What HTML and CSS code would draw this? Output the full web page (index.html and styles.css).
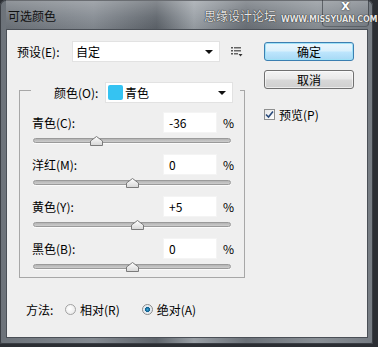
FILE: index.html
```html
<!DOCTYPE html>
<html lang="zh">
<head>
    <meta charset="UTF-8">
    <title>可选颜色</title>
    <link rel="stylesheet" href="styles.css">
</head>
<body>
    <div class="window">
        <div class="titlebar">
            <span class="title">可选颜色</span>
            <div class="closebox"><span class="close">X</span></div>
            <div class="watermark"><span class="mark-cn">思缘设计论坛</span><span class="mark-url">WWW.MISSYUAN.COM</span></div>
        </div>
        <div class="client">
            <div class="left">
                <div class="preset_row">
                    <span class="preset_label">预设(E):</span>
                    <div class="select preset_select"><span>自定</span><i class="arrow"></i></div>
                    <svg class="menu_icon" width="12" height="11" viewBox="0 0 12 11">
                        <rect x="0" y="1" width="2" height="1.5" fill="#555"/>
                        <rect x="3" y="1" width="7" height="1.5" fill="#666"/>
                        <rect x="0" y="4" width="2" height="1.5" fill="#555"/>
                        <rect x="3" y="4" width="7" height="1.5" fill="#666"/>
                        <rect x="0" y="7" width="2" height="1.5" fill="#555"/>
                        <rect x="3" y="7" width="4" height="1.5" fill="#666"/>
                        <path d="M7.5 8 L11.5 8 L9.5 10.5 Z" fill="#333"/>
                    </svg>
                </div>

                <div class="group">
                    <div class="legend">
                        <span class="legend_label">颜色(O):</span>
                        <div class="select color_select"><span class="swatch"></span><span>青色</span><i class="arrow"></i></div>
                    </div>

                    <div class="field"><span class="field_label">青色(C):</span><span class="input">-36</span><span class="pct">%</span></div>
                    <div class="slider"><div class="track"></div>
                        <svg class="thumb" style="left: 63px" width="13" height="10" viewBox="0 0 13 10"><path d="M6.5 0.5 L12.5 5 L12.5 9.5 L0.5 9.5 L0.5 5 Z" fill="url(#tg)" stroke="#7b7b7b"/><defs><linearGradient id="tg" x1="0" y1="0" x2="0" y2="1"><stop offset="0" stop-color="#ffffff"/><stop offset="1" stop-color="#d6d6d6"/></linearGradient></defs></svg>
                    </div>

                    <div class="field"><span class="field_label">洋红(M):</span><span class="input">0</span><span class="pct">%</span></div>
                    <div class="slider"><div class="track"></div>
                        <svg class="thumb" style="left: 99px" width="13" height="10" viewBox="0 0 13 10"><path d="M6.5 0.5 L12.5 5 L12.5 9.5 L0.5 9.5 L0.5 5 Z" fill="url(#tg)" stroke="#7b7b7b"/></svg>
                    </div>

                    <div class="field"><span class="field_label">黄色(Y):</span><span class="input">+5</span><span class="pct">%</span></div>
                    <div class="slider"><div class="track"></div>
                        <svg class="thumb" style="left: 104px" width="13" height="10" viewBox="0 0 13 10"><path d="M6.5 0.5 L12.5 5 L12.5 9.5 L0.5 9.5 L0.5 5 Z" fill="url(#tg)" stroke="#7b7b7b"/></svg>
                    </div>

                    <div class="field"><span class="field_label">黑色(B):</span><span class="input">0</span><span class="pct">%</span></div>
                    <div class="slider"><div class="track"></div>
                        <svg class="thumb" style="left: 99px" width="13" height="10" viewBox="0 0 13 10"><path d="M6.5 0.5 L12.5 5 L12.5 9.5 L0.5 9.5 L0.5 5 Z" fill="url(#tg)" stroke="#7b7b7b"/></svg>
                    </div>
                </div>

                <div class="method">
                    <span class="method_label">方法:</span>
                    <span class="radio"></span><span class="radio_text">相对(R)</span>
                    <span class="radio checked"></span><span class="radio_text">绝对(A)</span>
                </div>
            </div>

            <div class="right">
                <button class="btn btn_ok" type="button">确定</button>
                <button class="btn" type="button">取消</button>
                <div class="preview">
                    <span class="checkbox">
                        <svg width="9" height="9" viewBox="0 0 9 9"><path d="M1 4.5 L3.5 7 L8 1.5" stroke="#2a4a7a" stroke-width="1.6" fill="none"/></svg>
                    </span>
                    <span>预览(P)</span>
                </div>
            </div>
        </div>
    </div>
</body>
</html>
```

FILE: styles.css
```css
body {
    margin: 0;
    background-color: #2b2e33;
    font-family: "Noto Sans CJK SC", "Liberation Sans", sans-serif;
    font-size: 12px;
    color: #000;
}

.window {
    width: 373px;
    height: 344px;
    box-sizing: border-box;
    padding: 0 5px 6px 6px;
    border-radius: 6px 6px 2px 2px;
    background: linear-gradient(90deg, #6c7279 0%, #858b92 25%, #5e646b 42%, #9aa0a6 52%, #6b7178 66%, #8a9096 85%, #767c83 100%);
    box-shadow: inset 0 0 0 1px #3a3e44;
}

.titlebar {
    position: relative;
    height: 29px;
    display: flex;
    align-items: center;
    background: linear-gradient(180deg, rgba(255,255,255,0.25) 0%, rgba(255,255,255,0.05) 60%, rgba(0,0,0,0.05) 100%);
}
.title {
    margin-left: 2px;
    margin-top: 1px;
    color: #111;
}
.closebox {
    position: absolute;
    top: 0;
    right: -1px;
    width: 45px;
    height: 26px;
    border-left: 1px solid rgba(40,44,50,0.55);
    border-right: 1px solid rgba(40,44,50,0.55);
    border-bottom: 1px solid rgba(40,44,50,0.35);
    border-radius: 0 0 4px 4px;
    display: flex;
    justify-content: center;
}
.close {
    margin-top: 1px;
    font-family: "DejaVu Sans", sans-serif;
    font-weight: bold;
    font-size: 11px;
    line-height: 11px;
    height: 11px;
    color: #fff;
    text-shadow: 0 0 2px #222;
}
.watermark {
    position: absolute;
    top: 9px;
    left: 198px;
    display: flex;
    align-items: flex-end;
    white-space: nowrap;
    color: #e6e6e6;
    text-shadow: 0 0 1px #222, 0 0 1px #222;
}
.mark-cn {
    font-size: 12px;
    line-height: 14px;
}
.mark-url {
    margin-left: 5px;
    margin-bottom: -1px;
    font-family: "DejaVu Sans", sans-serif;
    font-weight: bold;
    font-size: 8px;
    line-height: 9px;
    letter-spacing: -0.2px;
}

.client {
    height: 309px;
    box-sizing: border-box;
    border: 1px solid #4a4f56;
    background-color: #efefef;
    display: flex;
    padding: 11px 0 0 10px;
}

.left {
    width: 235px;
}

.preset_row {
    display: flex;
    align-items: center;
    height: 21px;
}
.preset_label {
    width: 55px;
}
.select {
    position: relative;
    height: 21px;
    box-sizing: border-box;
    background-color: #fff;
    border: 1px solid #e2e2e2;
    display: flex;
    align-items: center;
    padding-left: 3px;
}
.preset_select {
    width: 148px;
}
.arrow {
    position: absolute;
    right: 6px;
    top: 8px;
    width: 0;
    height: 0;
    border-left: 4px solid transparent;
    border-right: 4px solid transparent;
    border-top: 4px solid #111;
}
.menu_icon {
    margin-left: 11px;
}

.group {
    margin: 28px 0 0 2px;
    width: 226px;
    box-sizing: border-box;
    border: 1px solid #a7a7a7;
    padding: 0 12px 5px 12px;
}
.legend {
    display: flex;
    align-items: center;
    margin: -9px 0 0 -1px;
    width: 209px;
    box-sizing: border-box;
    padding: 0 7px 0 23px;
    background-color: #efefef;
}
.legend_label {
    width: 51px;
}
.color_select {
    width: 128px;
    padding-left: 2px;
}
.swatch {
    width: 15px;
    height: 15px;
    margin-right: 2px;
    background-color: #35c3f2;
    border-radius: 2px;
}

.field {
    display: flex;
    align-items: center;
    height: 21px;
    margin-top: 8px;
}
.legend + .field {
    margin-top: 9px;
}
.field_label {
    flex: 1;
}
.input {
    width: 54px;
    height: 21px;
    box-sizing: border-box;
    background-color: #fff;
    border: 1px solid #f4f4f4;
    padding-left: 5px;
    line-height: 19px;
}
.pct {
    margin-left: 6px;
    width: 9px;
}

.slider {
    position: relative;
    margin: 1px 0 0 1px;
    width: 198px;
    height: 12px;
    display: flex;
    align-items: center;
}
.track {
    width: 100%;
    height: 5px;
    box-sizing: border-box;
    border: 1px solid #9a9a9a;
    border-radius: 3px;
    background: linear-gradient(180deg, #b4b4b4 0%, #cdcdcd 100%);
    box-shadow: 0 1px 0 #fbfbfb;
}
.thumb {
    position: absolute;
    top: 2px;
    margin-left: -6px;
}

.method {
    display: flex;
    align-items: center;
    margin: 23px 0 0 9px;
    height: 16px;
}
.method_label {
    width: 39px;
}
.radio {
    width: 11px;
    height: 11px;
    border-radius: 50%;
    box-sizing: border-box;
    border: 1px solid #a2a2a2;
    background: radial-gradient(circle at 40% 40%, #ffffff 0%, #e4e4e4 100%);
    margin-right: 3px;
}
.radio.checked {
    margin-left: 22px;
    border-color: #8a8a8a;
    background: radial-gradient(circle at 50% 50%, #3ba6d8 0%, #0e5f8e 35%, #dde6ee 40%, #f6f6f6 100%);
}
.radio_text {
    margin-left: 1px;
}

.right {
    margin: 1px 0 0 12px;
    width: 90px;
    display: flex;
    flex-direction: column;
}
.btn {
    width: 90px;
    height: 19px;
    margin-bottom: 9px;
    padding: 0;
    font-family: inherit;
    font-size: 12px;
    line-height: 15px;
    color: #000;
    border: 1px solid #707070;
    border-radius: 3px;
    background: linear-gradient(180deg, #f4f4f4 0%, #e8e8e8 48%, #d8d8d8 52%, #cfcfcf 100%);
    box-shadow: inset 0 0 0 1px rgba(255,255,255,0.6);
}
.btn_ok {
    border-color: #3c7fb1;
    background: linear-gradient(180deg, #eaf6fd 0%, #d9f0fc 48%, #bee6fd 52%, #a7d9f5 100%);
    box-shadow: inset 0 0 0 1px #9ee1f7;
}
.preview {
    display: flex;
    align-items: center;
    margin-top: 8px;
}
.checkbox {
    width: 11px;
    height: 11px;
    box-sizing: border-box;
    border: 1px solid #8e8f8f;
    background: linear-gradient(135deg, #e6e6e6 0%, #ffffff 100%);
    display: flex;
    align-items: center;
    justify-content: center;
    margin-right: 4px;
}
```
